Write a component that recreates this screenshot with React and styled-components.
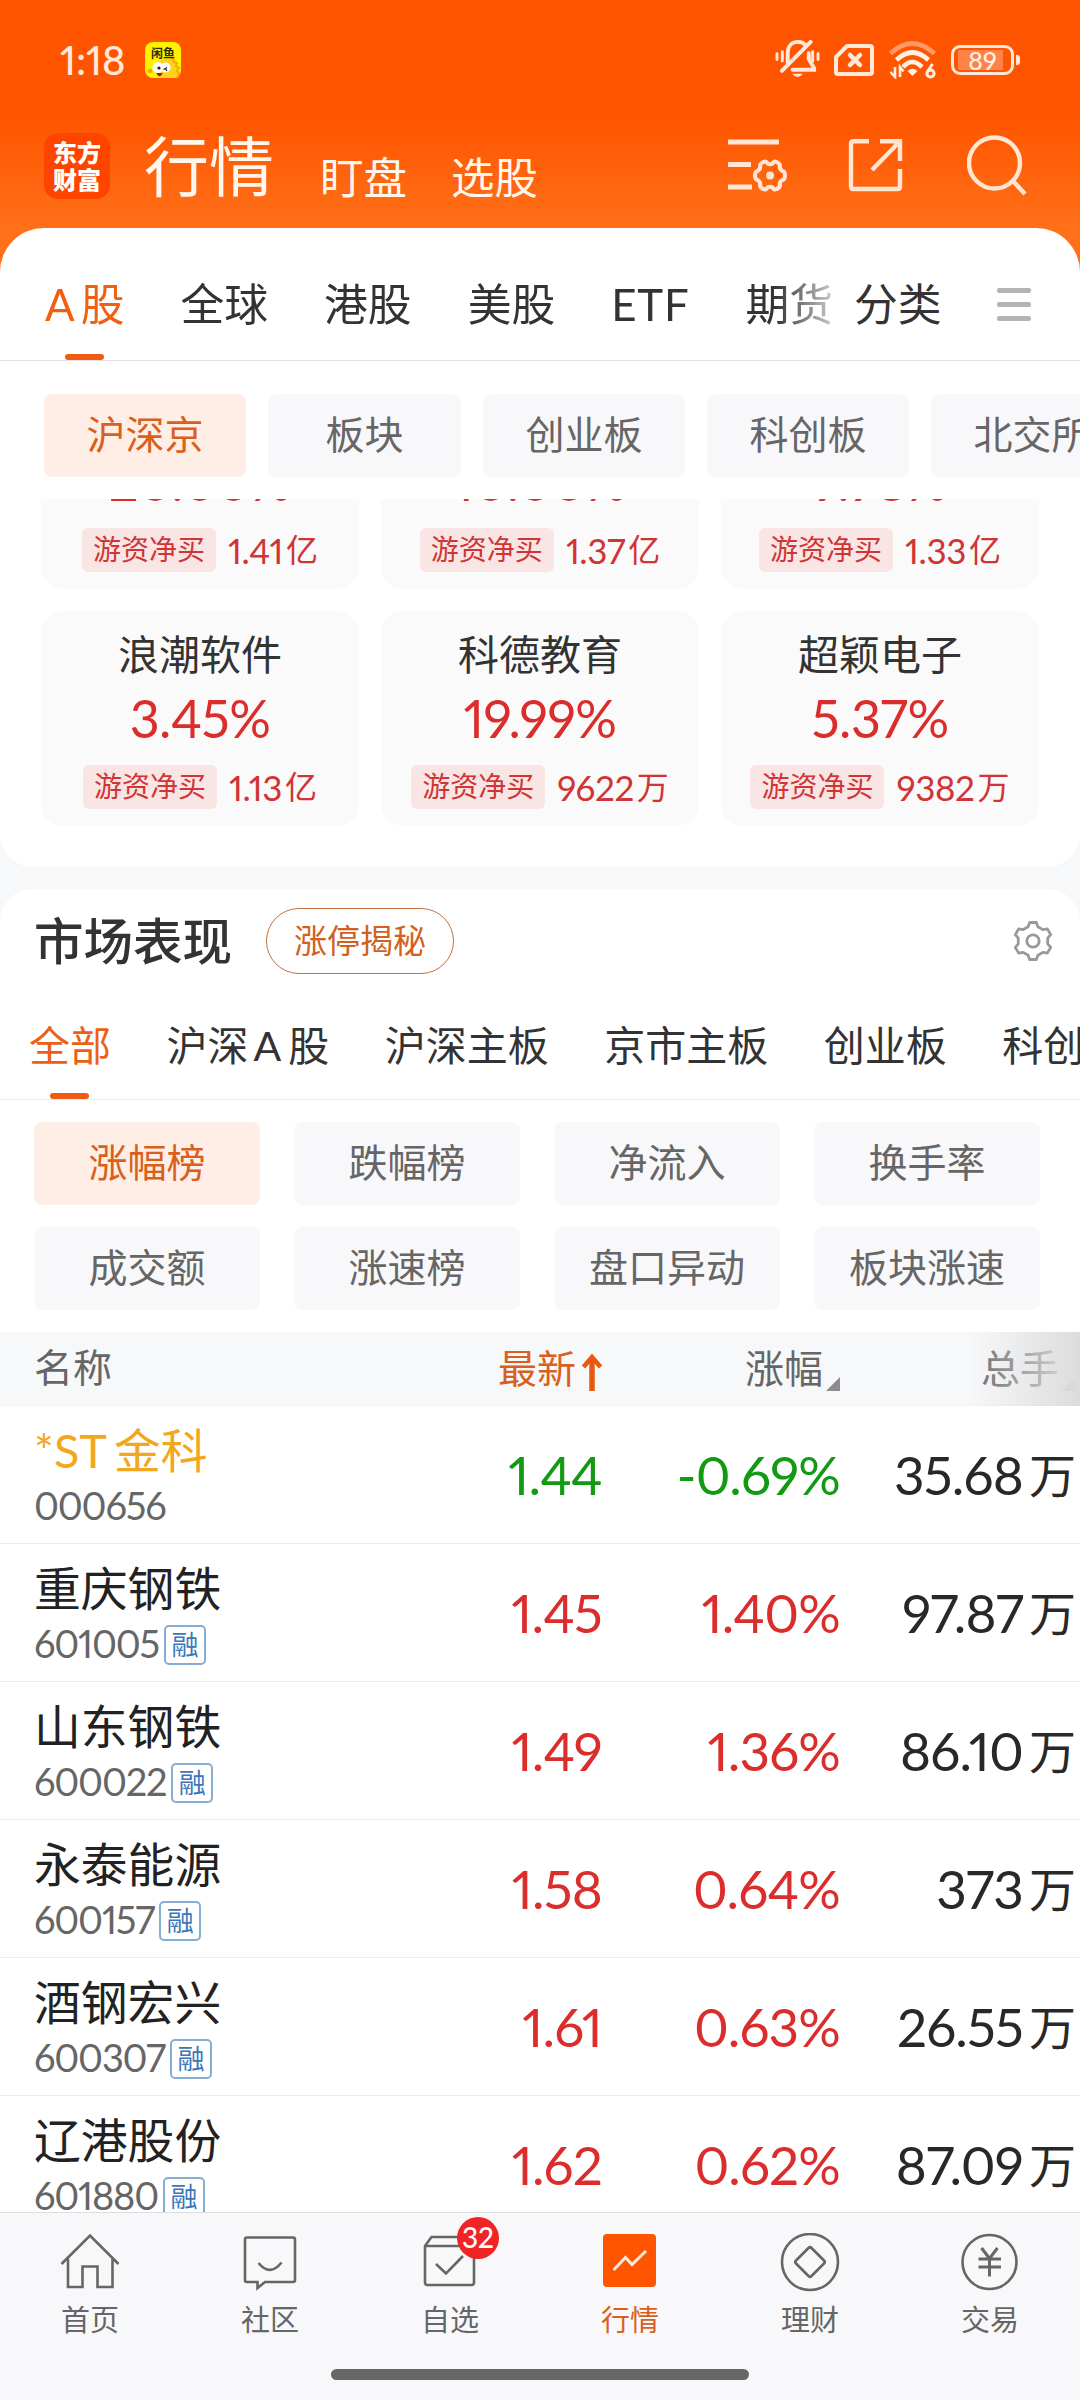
import styled, { createGlobalStyle, css } from "styled-components";

const MAIN_TABS = ["全球", "港股", "美股", "ETF", "期货"];

const BOARDS = ["沪深京", "板块", "创业板", "科创板", "北交所"];

const HOT_STOCKS = [
  { percent: "20.00%", amount: "1.41", unit: "亿" },
  { percent: "10.00%", amount: "1.37", unit: "亿" },
  { percent: "9.98%", amount: "1.33", unit: "亿" },
  { name: "浪潮软件", percent: "3.45%", amount: "1.13", unit: "亿" },
  { name: "科德教育", percent: "19.99%", amount: "9622", unit: "万" },
  { name: "超颖电子", percent: "5.37%", amount: "9382", unit: "万" },
];

const MARKETS = ["全部", "沪深A股", "沪深主板", "京市主板", "创业板", "科创"];

const RANKS = [
  "涨幅榜",
  "跌幅榜",
  "净流入",
  "换手率",
  "成交额",
  "涨速榜",
  "盘口异动",
  "板块涨速",
];

const STOCKS = [
  { name: "*ST金科", code: "000656", price: "1.44", change: "-0.69%", volume: "35.68", st: true, down: true },
  { name: "重庆钢铁", code: "601005", price: "1.45", change: "1.40%", volume: "97.87", margin: true },
  { name: "山东钢铁", code: "600022", price: "1.49", change: "1.36%", volume: "86.10", margin: true },
  { name: "永泰能源", code: "600157", price: "1.58", change: "0.64%", volume: "373", margin: true },
  { name: "酒钢宏兴", code: "600307", price: "1.61", change: "0.63%", volume: "26.55", margin: true },
  { name: "辽港股份", code: "601880", price: "1.62", change: "0.62%", volume: "87.09", margin: true },
];

// latin letters get a little air next to the chinese glyphs
const spaceLatin = (text) =>
  text.split(/([*A-Z]+)/).map((part, i, parts) =>
    i % 2 ? (
      <Latin key={i} $lead={!parts[i - 1]}>
        {part}
      </Latin>
    ) : (
      part
    )
  );

const gearPath = (cx, cy, outer, inner, teeth) => {
  const points = [];
  const step = (Math.PI * 2) / teeth;
  for (let i = 0; i < teeth; i++) {
    const mid = i * step - Math.PI / 2;
    [
      [-0.32, inner],
      [-0.17, outer],
      [0.17, outer],
      [0.32, inner],
    ].forEach(([offset, r]) => {
      const a = mid + offset * step;
      points.push(`${(cx + r * Math.cos(a)).toFixed(2)} ${(cy + r * Math.sin(a)).toFixed(2)}`);
    });
  }
  return `M${points.join("L")}Z`;
};

const FishIcon = () => (
  <svg width="36" height="36" viewBox="0 0 36 36">
    <rect width="36" height="36" rx="8" fill="#fff200" />
    <path d="M16 36C10 33 8 27 10 22C14 17 22 15 27 17C33 20 34 28 33 36Z" fill="#ffd21c" />
    <path d="M26 17l3 1 0 2 3 1-1 3 3 2-2 3 2 3-2 4" fill="none" stroke="#f9a800" strokeWidth="2" />
    <circle cx="5" cy="29" r="2.2" fill="#f9a800" />
    <circle cx="13" cy="25.500" r="5.500" fill="#fff" />
    <circle cx="20.500" cy="25.500" r="5" fill="#fff" />
    <circle cx="14" cy="26" r="1.600" fill="#222" />
    <path d="M18.500 27.500l3.500-2M20 26l2 3" stroke="#222" strokeWidth="1.300" />
    <path d="M11.500 31h6q-1 4-3.500 3T11.500 31z" fill="#b01818" />
    <text x="18" y="15.500" textAnchor="middle" fontSize="12" fontWeight="700" fill="#2b2b00">
      闲鱼
    </text>
  </svg>
);

const MuteIcon = () => (
  <svg width="45" height="42" viewBox="0 0 46 42" fill="none" stroke="#ffe8d8" strokeLinecap="round">
    <path d="M13 24V14C13 7 17 2.500 23.500 2.500C27 2.500 29.500 3.500 31.500 6" strokeWidth="4" />
    <path d="M34.500 14V20L40 29.500V31H18" strokeWidth="4" />
    <path d="M7 32L36.500 2.500" strokeWidth="4" />
    <path d="M17.500 35h11q-5.500 7-11 0z" fill="#ffe8d8" stroke="none" />
    <path d="M2 14.500V20.500M7.500 12.500V22M38.500 12.500V22M44 14.500V20.500" strokeWidth="3" />
  </svg>
);

const SimIcon = () => (
  <svg width="40" height="32" viewBox="0 0 40 32" fill="none" stroke="#ffe8d8" strokeWidth="4">
    <path d="M13 2H36Q38 2 38 4V28Q38 30 36 30H4Q2 30 2 28V13Z" strokeLinejoin="round" />
    <path d="M16 11L26 21M26 11L16 21" strokeWidth="4.500" strokeLinecap="round" />
  </svg>
);

const WifiIcon = () => (
  <svg width="48" height="38" viewBox="0 0 48 38" fill="none" stroke="#fff0e4" strokeWidth="4.600">
    <path d="M1.500 12.500Q23 -7.500 45.500 12.500" stroke="#ff9a66" />
    <path d="M7.500 19Q23 4 39.500 19" />
    <path d="M14 26Q23 16 33 26" />
    <path d="M18.500 30q5-4.500 10 0l-5 5z" fill="#fff0e4" stroke="none" />
    <path d="M6 26V36L1.500 31M11 36V26L14.500 30.500" strokeWidth="2.600" />
    <path d="M43.500 23L38.500 30.500" strokeWidth="3" />
    <circle cx="41.500" cy="32.500" r="3.600" strokeWidth="3" />
  </svg>
);

const ListGearIcon = () => (
  <svg width="60" height="56" viewBox="0 0 60 56" fill="none" stroke="#ffe5d2" strokeWidth="5">
    <path d="M0 5H51M0 27.500H23M0 50H24" />
    <path
      d="M36.500 24.500Q38.500 24.500 39.500 26.500Q42 28 44.500 26.500Q45.500 24.500 47.500 24.500Q51.500 26 52 28.500Q51 32 54.500 34Q57 34.500 57 38.500Q57 42.500 54.500 43Q51 45 52 48.500Q51.500 51 47.500 52.500Q45.500 52.500 44.500 50.500Q42 49 39.500 50.500Q38.500 52.500 36.500 52.500Q32.500 51 32 48.500Q33 45 29.500 43Q27 42.500 27 38.500Q27 34.500 29.500 34Q33 32 32 28.500Q32.500 26 36.500 24.500Z"
      strokeWidth="4"
      strokeLinejoin="round"
    />
    <circle cx="42" cy="38.500" r="4" fill="#ffe5d2" stroke="none" />
  </svg>
);

const ShareIcon = () => (
  <svg width="56" height="56" viewBox="0 0 56 56" fill="none" stroke="#ffe5d2" strokeWidth="4.400">
    <path d="M21 4.200H5.500Q3 4.200 3 6.700V49.500Q3 52 5.500 52H49.500Q52 52 52 49.500V32" />
    <path d="M32 4.200H52V24M52 4.200L24 33" />
  </svg>
);

const SearchIcon = () => (
  <svg width="60" height="62" viewBox="0 0 60 62" fill="none" stroke="#ffe5d2" strokeWidth="4.400">
    <circle cx="27.500" cy="29" r="25.500" />
    <path d="M45 46L58 60" />
  </svg>
);

const SettingIcon = () => (
  <svg width="40" height="40" viewBox="0 0 40 40" fill="none" stroke="#999" strokeWidth="2.800">
    <path d={gearPath(20, 20, 18.800, 15, 6)} strokeLinejoin="round" />
    <circle cx="20" cy="20" r="6.200" />
  </svg>
);

const NAV_ITEMS = [
  {
    label: "首页",
    icon: (
      <>
        <path d="M1.500 31L30 2.500L58.500 31" />
        <path d="M8 26V54H22.500V33.500H37.500V54H52.500V26" />
      </>
    ),
  },
  {
    label: "社区",
    icon: (
      <>
        <path d="M7 4.500H53Q55 4.500 55 6.500V47Q55 49 53 49H25L17.500 55V49H7Q5 49 5 47V6.500Q5 4.500 7 4.500Z" />
        <path d="M18.500 30Q30 44 41.500 29.500" />
      </>
    ),
  },
  {
    label: "自选",
    badge: "32",
    icon: (
      <>
        <path d="M5 13L11.500 4H46L54 13V49.500Q54 52 51.500 52H7.500Q5 52 5 49.500ZM5 13H54" />
        <path d="M16 31L26 40.500L43 23" />
      </>
    ),
  },
  {
    label: "行情",
    active: true,
    icon: (
      <>
        <rect x="3" y="1" width="53" height="53" rx="4" fill="#ff5500" stroke="none" />
        <path d="M13.500 37L25.500 24.500L32 31.500L46 18" stroke="#ffe8d8" strokeWidth="3" />
      </>
    ),
  },
  {
    label: "理财",
    icon: (
      <>
        <circle cx="30" cy="29" r="28" />
        <path d="M28.500 15Q30 13.500 31.500 15L44 27.500Q45.500 29 44 30.500L31.500 43Q30 44.500 28.500 43L16 30.500Q14.500 29 16 27.500Z" />
      </>
    ),
  },
  {
    label: "交易",
    icon: (
      <>
        <circle cx="29.500" cy="29" r="27" />
        <path d="M21.500 15L29.500 25.500L37.500 15M18.500 26H41M18.500 34H41M29.500 25.500V43.500" strokeWidth="3" />
      </>
    ),
  },
];

const App = () => {
  return (
    <Phone>
      <GlobalStyle />
      <StatusBar>
        <Clock>1:18</Clock>
        <FishIcon />
        <StatusIcons>
          <MuteIcon />
          <SimIcon />
          <WifiIcon />
          <Battery>
            <BatteryBody>
              <span>89</span>
            </BatteryBody>
            <BatteryCap />
          </Battery>
        </StatusIcons>
      </StatusBar>

      <Header>
        <Logo>
          <span>东方</span>
          <span>财富</span>
        </Logo>
        <HeaderTitle>行情</HeaderTitle>
        <HeaderLink>盯盘</HeaderLink>
        <HeaderLink>选股</HeaderLink>
        <HeaderActions>
          <ListGearIcon />
          <ShareIcon />
          <SearchIcon />
        </HeaderActions>
      </Header>

      <Sheet>
        <MainTabs>
          <TabScroller>
            <MainTab $active>
              A<span>股</span>
            </MainTab>
            {MAIN_TABS.map((tab) => (
              <MainTab key={tab}>{tab}</MainTab>
            ))}
          </TabScroller>
          <CategoryTab>分类</CategoryTab>
          <MenuButton>
            <i />
            <i />
            <i />
          </MenuButton>
        </MainTabs>

        <BoardRow>
          {BOARDS.map((board, i) => (
            <Chip key={board} $active={i === 0}>
              {board}
            </Chip>
          ))}
        </BoardRow>

        <HotViewport>
          <HotGrid>
            {HOT_STOCKS.map((stock) => (
              <HotCard key={stock.amount}>
                <HotName>{stock.name}</HotName>
                <HotPercent>{stock.percent}</HotPercent>
                <HotFooter>
                  <BuyTag>游资净买</BuyTag>
                  <Amount>{stock.amount}</Amount>
                  <Unit>{stock.unit}</Unit>
                </HotFooter>
              </HotCard>
            ))}
          </HotGrid>
        </HotViewport>
      </Sheet>

      <MarketPanel>
        <PanelHead>
          <h2>市场表现</h2>
          <Pill>涨停揭秘</Pill>
          <SettingIcon />
        </PanelHead>

        <MarketTabs>
          {MARKETS.map((market, i) => (
            <MarketTab key={market} $active={i === 0}>
              {spaceLatin(market)}
            </MarketTab>
          ))}
        </MarketTabs>

        <RankGrid>
          {RANKS.map((rank, i) => (
            <Chip key={rank} $active={i === 0}>
              {rank}
            </Chip>
          ))}
        </RankGrid>

        <TableHead>
          <span>名称</span>
          <SortCell $active>
            最新
            <svg width="20" height="38" viewBox="0 0 20 38" fill="none" stroke="#e55a10">
              <path d="M10 38V4" strokeWidth="5.500" />
              <path d="M1.500 14L10 4L18.500 14" strokeWidth="4.500" />
            </svg>
          </SortCell>
          <SortCell>
            涨幅
            <Corner />
          </SortCell>
          <SortCell>
            总手
            <Corner />
          </SortCell>
          <HeadFade />
        </TableHead>

        {STOCKS.map((stock) => (
          <Row key={stock.code}>
            <div>
              <StockName $st={stock.st}>{spaceLatin(stock.name)}</StockName>
              <StockCode>
                <span>{stock.code}</span>
                {stock.margin && <MarginBadge>融</MarginBadge>}
              </StockCode>
            </div>
            <Figure $color={stock.down ? "#129a12" : "#dc2d2d"}>{stock.price}</Figure>
            <Figure $color={stock.down ? "#129a12" : "#dc2d2d"}>{stock.change}</Figure>
            <Figure $color="#282828">
              {stock.volume}
              <span>万</span>
            </Figure>
          </Row>
        ))}
      </MarketPanel>

      <BottomNav>
        <NavItems>
          {NAV_ITEMS.map((item) => (
            <NavItem key={item.label} $active={item.active}>
              <svg width="60" height="60" viewBox="0 0 60 60" fill="none" stroke="#666" strokeWidth="2.600">
                {item.icon}
              </svg>
              <span>{item.label}</span>
              {item.badge && <NavBadge>{item.badge}</NavBadge>}
            </NavItem>
          ))}
        </NavItems>
        <HomeBar />
      </BottomNav>
    </Phone>
  );
};

const GlobalStyle = createGlobalStyle`
  * {
    box-sizing: border-box;
  }
  body {
    margin: 0;
    font-family: Lato, "Noto Sans CJK SC", sans-serif;
    font-variant-numeric: proportional-nums;
  }
  svg {
    display: block;
    flex: none;
  }
`;

const Phone = styled.div`
  width: 1080px;
  height: 2400px;
  overflow: hidden;
  display: flex;
  flex-direction: column;
  background: linear-gradient(#ff5500 0, #ff5500 118px, #ff7019 225px, #ff7019 300px, #f6f8fa 300px);
  white-space: nowrap;
`;

const Latin = styled.span`
  margin: 0 7px 0 ${({ $lead }) => ($lead ? "0" : "5px")};
`;

const StatusBar = styled.div`
  height: 120px;
  flex: none;
  display: flex;
  align-items: center;
  padding: 0 60px;
`;

const Clock = styled.div`
  width: 85px;
  font-size: 40px;
  font-weight: 500;
  line-height: 40px;
  color: #ffe8d8;
`;

const StatusIcons = styled.div`
  display: flex;
  align-items: center;
  gap: 14.500px;
  margin-left: auto;
`;

const Battery = styled.div`
  display: flex;
  align-items: center;
  gap: 2px;
`;

const BatteryBody = styled.div`
  width: 63px;
  height: 30px;
  border: 3px solid #ffe8d8;
  border-radius: 9px;
  padding: 2px 8px 2px 4px;

  span {
    display: block;
    height: 20px;
    background: #ff8248;
    color: #fff0e4;
    font-size: 25px;
    font-weight: 500;
    line-height: 20px;
    text-align: center;
    padding-left: 4px;
  }
`;

const BatteryCap = styled.div`
  width: 4px;
  height: 10px;
  border-radius: 0 3px 3px 0;
  background: #ffe8d8;
`;

const Header = styled.header`
  height: 108px;
  flex: none;
  display: flex;
  align-items: flex-start;
  padding: 13px 53px 0 44px;
  color: #fff6ec;
`;

const Logo = styled.div`
  width: 66px;
  height: 66px;
  border-radius: 14px;
  background: #ff4400;
  display: flex;
  flex-direction: column;
  align-items: center;
  justify-content: center;
  font-size: 24px;
  font-weight: 900;
  line-height: 27px;
  color: #fff;
`;

const HeaderTitle = styled.div`
  margin-left: 34px;
  font-size: 65px;
  line-height: 66px;
`;

const HeaderLink = styled.div`
  margin: 22px 0 0 44px;
  font-size: 43.500px;
  line-height: 44px;

  ${HeaderTitle} + & {
    margin-left: 46px;
  }
`;

const HeaderActions = styled.div`
  display: flex;
  align-items: center;
  margin: 1px 0 0 auto;
  gap: 60px;

  svg + svg + svg {
    margin-left: 3px;
  }
`;

const Sheet = styled.section`
  height: 639px;
  flex: none;
  background: #fff;
  border-radius: 44px 44px 33px 33px;
  overflow: hidden;
`;

const MainTabs = styled.div`
  height: 133px;
  display: flex;
  align-items: center;
  padding: 20px 49px 0 45px;
  border-bottom: 1px solid #e0e0e0;
`;

const TabScroller = styled.div`
  width: 788px;
  height: 112px;
  overflow: hidden;
  display: flex;
  gap: 56px;
  mask-image: linear-gradient(90deg, #000 730px, rgba(0, 0, 0, 0.25) 788px);
`;

const underline = css`
  &::after {
    content: "";
    width: 39px;
    height: 6px;
    border-radius: 3px;
    background: #f25a12;
    position: absolute;
    bottom: 0;
    left: calc(50% - 20px);
  }
`;

const MainTab = styled.div`
  position: relative;
  flex: none;
  font-size: 43.800px;
  line-height: 112px;
  color: ${({ $active }) => ($active ? "#f0600f" : "#333")};
  ${({ $active }) => $active && underline}

  span {
    margin-left: 6px;
  }

  &:nth-child(5) {
    letter-spacing: 0.800px;
  }
`;

const CategoryTab = styled.div`
  margin-left: 21px;
  font-size: 43.800px;
  line-height: 112px;
  color: #333;
`;

const MenuButton = styled.div`
  display: flex;
  flex-direction: column;
  gap: 9px;
  margin-left: auto;

  i {
    width: 34px;
    height: 5px;
    border-radius: 2px;
    background: #b4b4b4;
  }
`;

const BoardRow = styled.div`
  display: flex;
  gap: 22px;
  padding: 33px 0 22px 44px;
`;

const Chip = styled.div`
  flex: none;
  min-width: 193px;
  height: 83px;
  padding: 0 42.500px;
  border-radius: 8px;
  background: ${({ $active }) => ($active ? "#ffeee6" : "#f8f8fa")};
  color: ${({ $active }) => ($active ? "#d9601c" : "#666")};
  font-size: 39px;
  line-height: 81px;
  text-align: center;
`;

/* the list is scrolled part way, so the first row is cut off at the top */
const HotViewport = styled.div`
  height: 368px;
  overflow: hidden;
  display: flex;
  flex-direction: column;
  justify-content: flex-end;
  padding-bottom: 41px;
`;

const HotGrid = styled.div`
  flex: none;
  display: grid;
  grid-template-columns: repeat(3, 318px);
  grid-auto-rows: 215px;
  gap: 22px;
  padding-left: 41px;
`;

const HotCard = styled.div`
  display: flex;
  flex-direction: column;
  align-items: center;
  padding-top: 20px;
  border-radius: 22px;
  background: #fafafa;
`;

const HotName = styled.div`
  height: 48px;
  font-size: 41px;
  line-height: 48px;
  color: #333;
`;

const HotPercent = styled.div`
  margin-top: 9px;
  font-size: 52px;
  line-height: 60px;
  letter-spacing: -0.500px;
  color: #dc2d2d;
`;

const HotFooter = styled.div`
  display: flex;
  align-items: center;
  margin-top: 17px;
  font-size: 35px;
  line-height: 44px;
  color: #d03434;
`;

const BuyTag = styled.div`
  height: 44px;
  margin-right: 12px;
  padding: 0 11px;
  border-radius: 6px;
  background: #f9e5e4;
  font-size: 28px;
  line-height: 43px;
`;

const Amount = styled.span`
  line-height: 42px;
  letter-spacing: -0.400px;
`;

const Unit = styled.span`
  margin-left: 3px;
  font-size: 32px;
`;

const MarketPanel = styled.section`
  height: 1323px;
  flex: none;
  margin-top: 22px;
  background: #fff;
  border-radius: 33px 33px 0 0;
  overflow: hidden;
`;

const PanelHead = styled.div`
  height: 105px;
  display: flex;
  align-items: center;
  padding: 0 27px 1px 34px;

  h2 {
    margin: 0;
    font-size: 49.500px;
    font-weight: 500;
    line-height: 60px;
    color: #333;
  }

  svg {
    margin-left: auto;
  }
`;

const Pill = styled.div`
  height: 66px;
  margin-left: 34px;
  padding: 0 27px;
  border: 1.500px solid #c4703a;
  border-radius: 33px;
  font-size: 33px;
  line-height: 62px;
  color: #d3601c;
`;

const MarketTabs = styled.div`
  height: 106px;
  display: flex;
  gap: 55.500px;
  padding-left: 29px;
  border-bottom: 1px solid #ececec;
`;

const MarketTab = styled.div`
  position: relative;
  flex: none;
  font-size: 41px;
  line-height: 104px;
  color: ${({ $active }) => ($active ? "#ec5f14" : "#333")};
  ${({ $active }) => $active && underline}
`;

const RankGrid = styled.div`
  display: grid;
  grid-template-columns: repeat(4, 226px);
  gap: 22px 34px;
  padding: 22px 0 22px 34px;

  ${Chip} {
    padding: 0;
  }
`;

const columns = css`
  display: grid;
  grid-template-columns: 368px 200px 238px 236px;
  padding-left: 34px;
`;

const TableHead = styled.div`
  ${columns}
  position: relative;
  height: 74px;
  background: #f6f8fa;
  border-bottom: 1px solid #f0f1f3;
  font-size: 39px;
  line-height: 71px;
  color: #666;
`;

const SortCell = styled.div`
  display: flex;
  justify-content: flex-end;
  align-items: center;
  gap: ${({ $active }) => ($active ? "6px" : "3px")};
  color: ${({ $active }) => ($active ? "#d9601c" : "inherit")};

  svg {
    margin-top: 6px;
  }
`;

const Corner = styled.i`
  align-self: flex-end;
  margin-bottom: 14px;
  border: 7px solid #8c8c90;
  border-top-color: transparent;
  border-left-color: transparent;
`;

const HeadFade = styled.div`
  position: absolute;
  top: 0;
  right: 0;
  width: 112px;
  height: 74px;
  background: linear-gradient(90deg, rgba(222, 222, 222, 0), rgba(222, 222, 222, 0.9) 85%, #dcdcdc);
`;

const Row = styled.div`
  ${columns}
  height: 138px;
  padding-top: 20px;
  border-bottom: 1px solid #ececec;
`;

const StockName = styled.div`
  font-size: 46.800px;
  line-height: 48px;
  color: ${({ $st }) => ($st ? "#f3a71c" : "#222")};
`;

const StockCode = styled.div`
  display: flex;
  align-items: center;
  gap: 5px;
  height: 40px;
  margin-top: 13px;
  font-size: 38px;
  line-height: 37px;
  letter-spacing: -1.200px;
  color: #666;

  span {
    height: 40px;
  }
`;

const MarginBadge = styled.div`
  width: 42px;
  height: 40px;
  border: 2px solid #86aed4;
  border-radius: 5px;
  font-size: 27px;
  line-height: 35px;
  letter-spacing: 0;
  text-align: center;
  color: #3a76b8;
`;

const Figure = styled.div`
  display: flex;
  justify-content: flex-end;
  align-items: center;
  height: 96px;
  font-size: 53px;
  letter-spacing: -0.800px;
  color: ${({ $color }) => $color};

  span {
    margin: 0 0 3px 6px;
    font-size: 47px;
    letter-spacing: 0;
  }
`;

const BottomNav = styled.nav`
  height: 188px;
  flex: none;
  background: #f8f8fb;
  border-top: 1px solid #dedee0;
`;

const NavItems = styled.div`
  display: grid;
  grid-template-columns: repeat(6, 180px);
  height: 156px;
`;

const NavItem = styled.div`
  position: relative;
  display: flex;
  flex-direction: column;
  align-items: center;
  padding-top: 20px;
  font-size: 29px;
  line-height: 40px;
  color: ${({ $active }) => ($active ? "#d9601c" : "#666")};

  svg {
    margin-bottom: 7px;
  }
`;

const NavBadge = styled.div`
  position: absolute;
  top: 4px;
  left: 97px;
  width: 42px;
  height: 42px;
  border-radius: 50%;
  background: #f02424;
  color: #fff;
  font-size: 28px;
  font-weight: 500;
  line-height: 40px;
  text-align: center;
`;

const HomeBar = styled.div`
  width: 418px;
  height: 11px;
  margin: 0 auto;
  border-radius: 6px;
  background: #666;
`;

export default App;
